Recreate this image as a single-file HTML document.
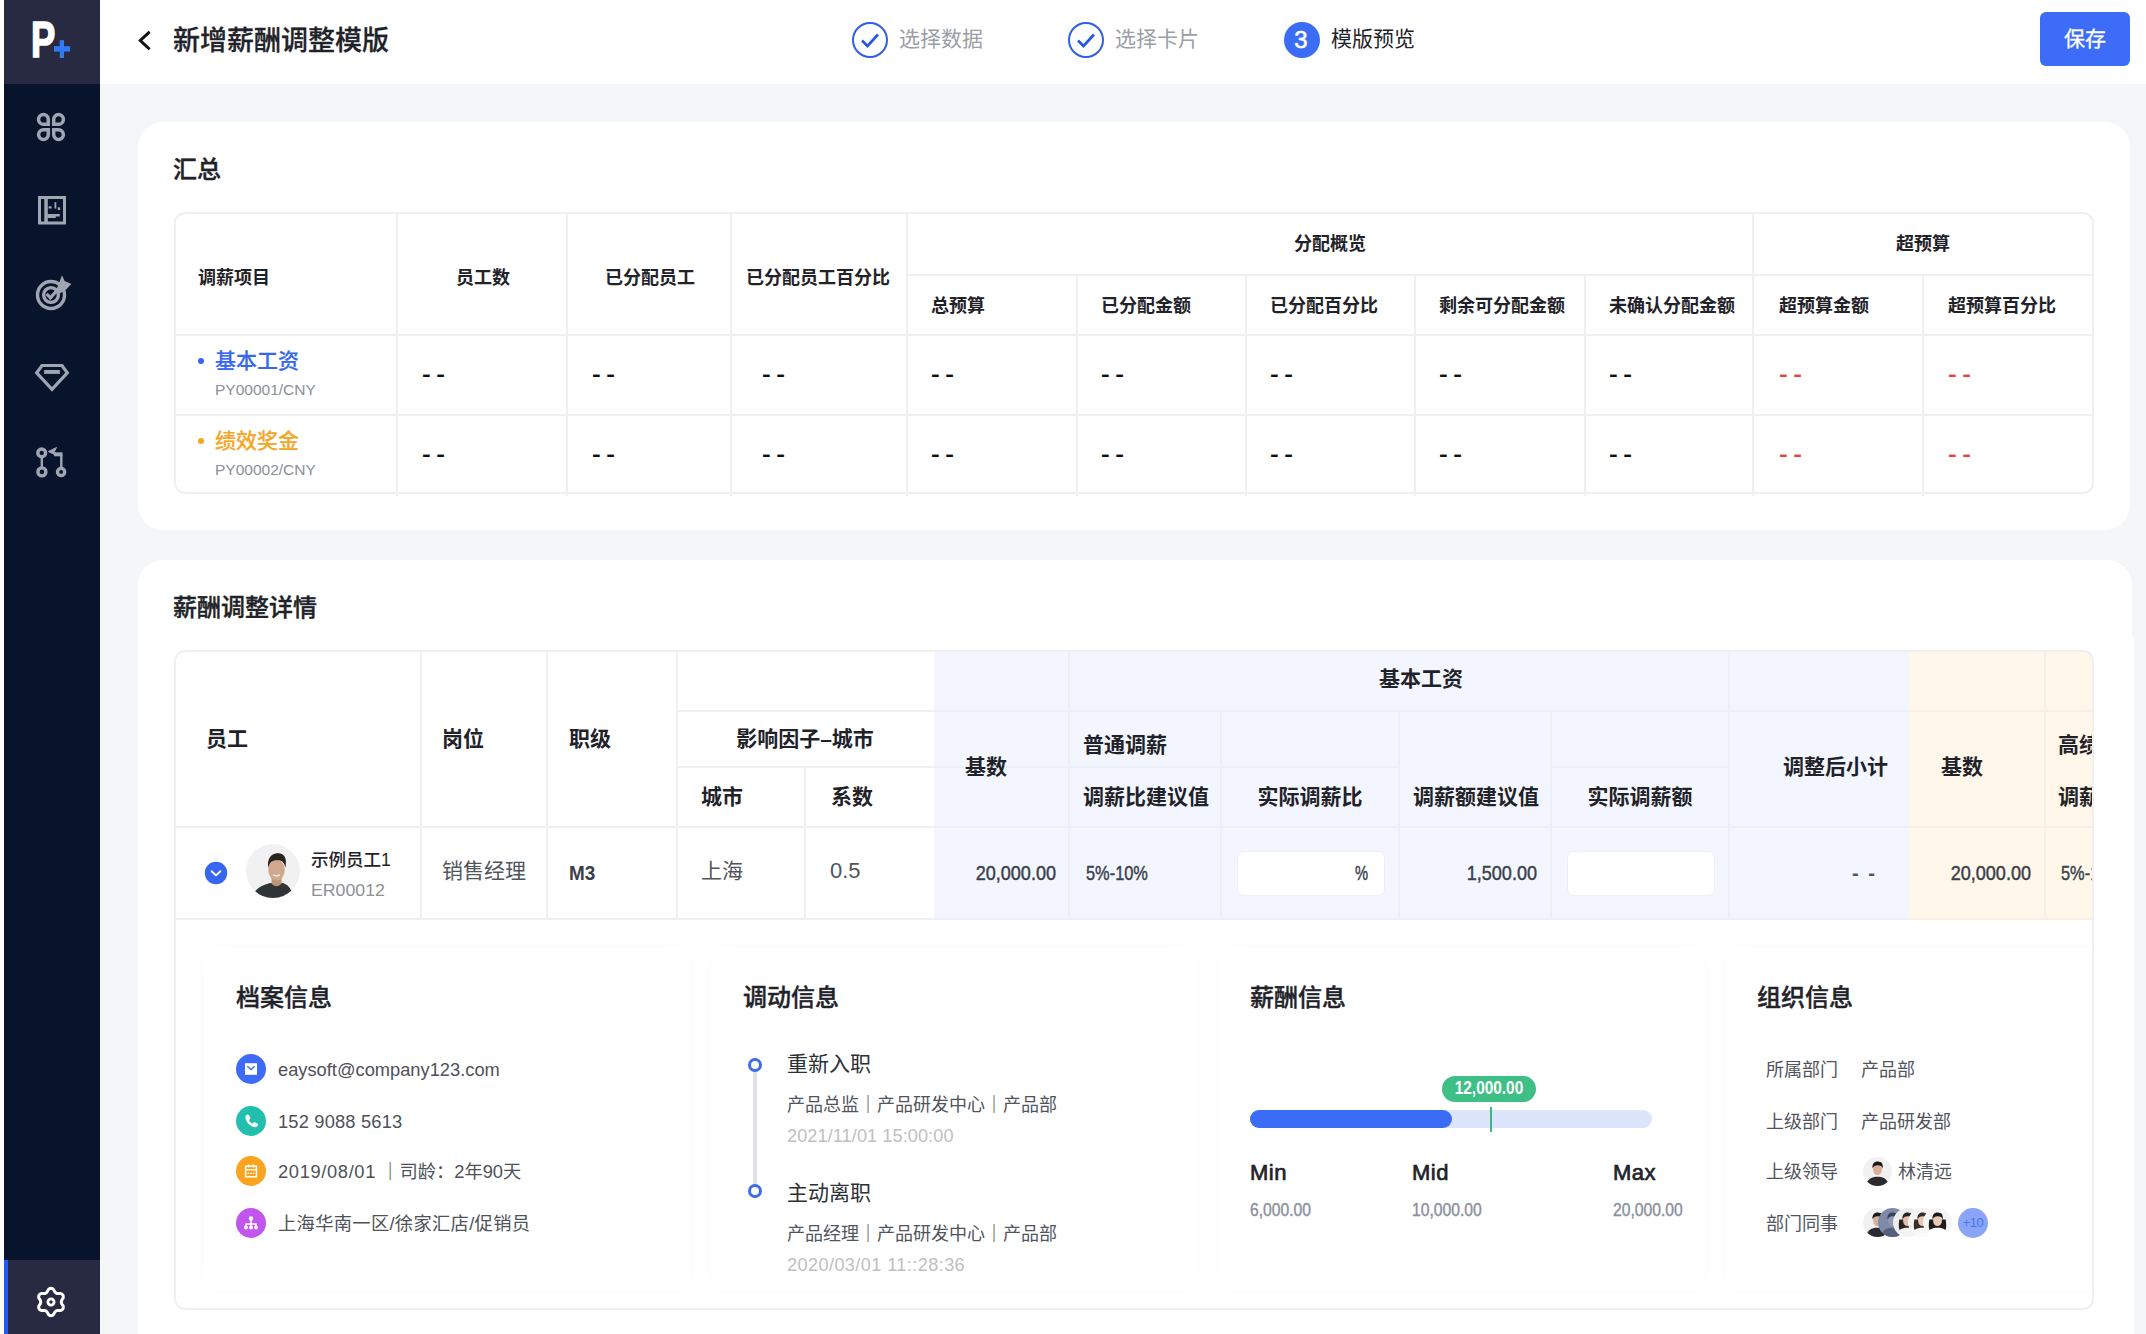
<!DOCTYPE html>
<html lang="zh-CN">
<head>
<meta charset="utf-8">
<title>新增薪酬调整模版</title>
<style>
*{box-sizing:border-box;margin:0;padding:0}
html,body{width:2146px;height:1334px;overflow:hidden;background:#f5f6f8}
body{font-family:"Liberation Sans","Noto Sans CJK SC",sans-serif;color:#1f2329;position:relative}
.abs{position:absolute}
.t{position:absolute;white-space:nowrap;line-height:1}
#side{position:absolute;left:4px;top:0;width:96px;height:1334px;background:#07142b}
#logo{position:absolute;left:0;top:0;width:96px;height:84px;background:#272a40}
#setbox{position:absolute;left:0;top:1260px;width:96px;height:74px;background:#272a40;border-left:4px solid #1f5bff}
#leftstrip{position:absolute;left:0;top:0;width:4px;height:1334px;background:#fff}
#hdr{position:absolute;left:100px;top:0;width:2046px;height:84px;background:#fff}
#save{position:absolute;left:2040px;top:12px;width:90px;height:54px;border-radius:6px;background:#3c6cf8;color:#fff;font-size:21px;line-height:54px;text-align:center;-webkit-text-stroke:.3px #fff}
.card{position:absolute;background:#fff;border-radius:25px}
.h1{font-size:24px;font-weight:500;color:#1f2329;-webkit-text-stroke:.4px #1f2329}
.tbl{position:absolute;border:2px solid #f0f0f1;border-radius:11px}
.vl{position:absolute;width:2px;background:#f0f0f0}
.hl{position:absolute;height:2px;background:#f0f0f0}
.th{font-size:18px;font-weight:700;color:#1f2329}
.th2{font-size:21px;font-weight:700;color:#1f2329}
.td{font-size:21px;color:#50545c}
.dash{font-size:20.5px;font-weight:700;color:#111;word-spacing:-1.3px;transform:scaleX(1.28);transform-origin:0 50%}
.num{font-size:21px;color:#3a3f4a;-webkit-text-stroke:.45px #3a3f4a}
</style>
</head>
<body>
<div id="leftstrip"></div>
<div id="side">
  <div id="logo"></div>
  <div class="t" style="left:26.8px;top:9.6px;width:40px;font-size:49.5px;line-height:60px;font-weight:700;color:#fff;-webkit-text-stroke:1.6px #fff;transform:scaleX(.735);transform-origin:0 0;">P</div>
  <svg class="abs" style="left:48px;top:38px" width="20" height="22" viewBox="0 0 20 22"><rect x="7.75" y="2.1" width="4.3" height="17.9" fill="#2f7bf6"/><rect x="2" y="8.2" width="16.1" height="5.4" fill="#2f7bf6"/></svg>
  <svg class="abs" style="left:31px;top:111px" width="32" height="32" viewBox="0 0 32 32" fill="none" stroke="#a0a5b2" stroke-width="3.5">
    <path d="M13.3 13.3 H8.45 A4.85 4.85 0 1 1 13.3 8.45 Z"/><path d="M18.7 13.3 V8.45 A4.85 4.85 0 1 1 23.55 13.3 Z"/><path d="M13.3 18.7 V23.55 A4.85 4.85 0 1 1 8.45 18.7 Z"/><path d="M18.7 18.7 H23.55 A4.85 4.85 0 1 1 18.7 23.55 Z"/>
  </svg>
  <svg class="abs" style="left:32px;top:194px" width="32" height="32" viewBox="0 0 32 32" fill="#a0a5b2" stroke="none">
    <path d="M2 2 H30 V30.4 H2 Z M5 5 V27.4 H27 V5 Z" fill-rule="evenodd"/><rect x="8.3" y="4" width="3.5" height="24"/><path d="M11.5 19.9 H23.8 V22.6 H19.8 V24 H11.5 Z"/><rect x="18.5" y="8.2" width="1.8" height="6.4"/><rect x="21.8" y="13.3" width="2.3" height="2.7"/><rect x="12.6" y="12.3" width="3" height="2.2"/>
  </svg>
  <svg class="abs" style="left:30px;top:272px" width="40" height="40" viewBox="0 0 40 40" fill="none" stroke="#a0a5b2" stroke-width="3.4">
    <circle cx="17" cy="23" r="13.5"/><circle cx="17" cy="23" r="7.4"/><path d="M12.6 21.8 L16.4 25.8 L26 15" stroke-width="3.2"/><path d="M22.2 18.4 L28 3.2 L30.6 9 L37.4 12.1 L31.1 18.4 L25.5 21.5 Z" fill="#a0a5b2" stroke="none"/>
  </svg>
  <svg class="abs" style="left:28px;top:360px" width="40" height="36" viewBox="0 0 40 36" fill="none" stroke="#a0a5b2" stroke-width="3.2" stroke-linejoin="miter">
    <path d="M10 5.5 H30 L35.3 12.8 L20 29.3 L4.7 12.8 Z"/><rect x="12.1" y="10" width="15.8" height="3.9" fill="#a0a5b2" stroke="none"/>
  </svg>
  <svg class="abs" style="left:28px;top:444px" width="40" height="40" viewBox="0 0 40 40" fill="none" stroke="#a0a5b2" stroke-width="3.4">
    <circle cx="9.7" cy="8.9" r="3.9"/><circle cx="9.9" cy="27.9" r="4"/><circle cx="29.1" cy="27.9" r="3.6"/><path d="M9.8 13v11M29.3 24V11" stroke-width="2.4"/><path d="M30.5 10.3 H22" stroke-width="4"/><path d="M24.5 3.5 L16.3 7.5 L24.5 11.5 L22.5 7.5 Z" fill="#a0a5b2" stroke-width="1"/>
  </svg>
  <div id="setbox"></div>
  <svg class="abs" style="left:29px;top:1284px" width="36" height="36" viewBox="0 0 36 36" fill="none" stroke="#fff" stroke-width="3" stroke-linejoin="round">
    <path d="M18.0 4.3 L18.9 4.4 L19.7 4.8 L20.5 5.4 L21.1 6.4 L21.6 7.5 L22.1 8.1 L22.6 8.7 L23.1 9.1 L23.8 9.4 L24.5 9.5 L25.3 9.6 L26.5 9.5 L27.7 9.5 L28.6 9.9 L29.3 10.4 L29.9 11.1 L30.2 12.0 L30.3 12.9 L30.2 13.9 L29.6 14.9 L28.9 15.8 L28.6 16.6 L28.4 17.3 L28.3 18.0 L28.4 18.7 L28.6 19.4 L28.9 20.2 L29.6 21.1 L30.2 22.1 L30.3 23.1 L30.2 24.0 L29.9 24.8 L29.3 25.6 L28.6 26.1 L27.7 26.5 L26.5 26.5 L25.3 26.4 L24.5 26.5 L23.8 26.6 L23.1 26.9 L22.6 27.3 L22.1 27.9 L21.6 28.5 L21.1 29.6 L20.5 30.6 L19.7 31.2 L18.9 31.6 L18.0 31.7 L17.1 31.6 L16.3 31.2 L15.5 30.6 L14.9 29.6 L14.4 28.5 L13.9 27.9 L13.4 27.3 L12.9 26.9 L12.2 26.6 L11.5 26.5 L10.7 26.4 L9.5 26.5 L8.3 26.5 L7.4 26.1 L6.7 25.6 L6.1 24.9 L5.8 24.0 L5.7 23.1 L5.8 22.1 L6.4 21.1 L7.1 20.2 L7.4 19.4 L7.6 18.7 L7.7 18.0 L7.6 17.3 L7.4 16.6 L7.1 15.8 L6.4 14.9 L5.8 13.9 L5.7 12.9 L5.8 12.0 L6.1 11.1 L6.7 10.4 L7.4 9.9 L8.3 9.5 L9.5 9.5 L10.7 9.6 L11.5 9.5 L12.2 9.4 L12.8 9.1 L13.4 8.7 L13.9 8.1 L14.4 7.5 L14.9 6.4 L15.5 5.4 L16.3 4.8 L17.1 4.4 Z"/>
    <circle cx="18" cy="18" r="3.1" stroke-width="2.8"/>
  </svg>
</div>
<div id="hdr"></div>
<svg class="abs" style="left:132px;top:26px" width="28" height="28" viewBox="0 0 28 28"><path d="M16.5 6.8 L8.3 14.5 L16.5 22.2" fill="none" stroke="#111" stroke-width="3" stroke-linecap="square" stroke-linejoin="miter"/></svg>
<div class="t" style="left:173px;top:23px;font-size:27px;line-height:36px;font-weight:500;color:#1f2329;-webkit-text-stroke:.3px #1f2329">新增薪酬调整模版</div>
<svg class="abs" style="left:850px;top:20px" width="40" height="40" viewBox="0 0 40 40"><circle cx="20" cy="20" r="17" fill="#fff" stroke="#2f5fe8" stroke-width="2"/><path d="M12 20.5 L17.5 26 L28 14.5" fill="none" stroke="#2455e6" stroke-width="2.6"/></svg>
<div class="t" style="left:899px;top:24px;font-size:21px;line-height:30px;color:#9a9ea6">选择数据</div>
<svg class="abs" style="left:1066px;top:20px" width="40" height="40" viewBox="0 0 40 40"><circle cx="20" cy="20" r="17" fill="#fff" stroke="#2f5fe8" stroke-width="2"/><path d="M12 20.5 L17.5 26 L28 14.5" fill="none" stroke="#2455e6" stroke-width="2.6"/></svg>
<div class="t" style="left:1115px;top:24px;font-size:21px;line-height:30px;color:#9a9ea6">选择卡片</div>
<div class="abs" style="left:1284px;top:22px;width:36px;height:36px;border-radius:50%;background:#3b6cf6;color:#fff;font-size:24px;line-height:35px;text-align:center;text-indent:-2px;-webkit-text-stroke:.6px #fff">3</div>
<div class="t" style="left:1331px;top:24px;font-size:21px;line-height:30px;color:#1f2329">模版预览</div>
<div id="save">保存</div>
<div class="card" style="left:138px;top:122px;width:1992px;height:408px"></div>
<div class="t h1" style="left:173px;top:154px;line-height:32px">汇总</div>
<div class="tbl" style="left:174px;top:212px;width:1920px;height:282px"></div>
<div class="vl" style="left:396px;top:214px;height:282px"></div>
<div class="vl" style="left:566px;top:214px;height:282px"></div>
<div class="vl" style="left:730px;top:214px;height:282px"></div>
<div class="vl" style="left:906px;top:214px;height:282px"></div>
<div class="vl" style="left:1076px;top:276px;height:220px"></div>
<div class="vl" style="left:1245px;top:276px;height:220px"></div>
<div class="vl" style="left:1414px;top:276px;height:220px"></div>
<div class="vl" style="left:1584px;top:276px;height:220px"></div>
<div class="vl" style="left:1752px;top:214px;height:282px"></div>
<div class="vl" style="left:1922px;top:276px;height:220px"></div>
<div class="hl" style="left:908px;top:274px;width:1184px"></div>
<div class="hl" style="left:176px;top:334px;width:1916px"></div>
<div class="hl" style="left:176px;top:414px;width:1916px"></div>
<div class="t th" style="left:198px;top:265px;line-height:26px">调薪项目</div>
<div class="t th" style="left:383px;width:200px;text-align:center;top:265px;line-height:26px">员工数</div>
<div class="t th" style="left:550px;width:200px;text-align:center;top:265px;line-height:26px">已分配员工</div>
<div class="t th" style="left:718px;width:200px;text-align:center;top:265px;line-height:26px">已分配员工百分比</div>
<div class="t th" style="left:1230px;width:200px;text-align:center;top:231px;line-height:26px">分配概览</div>
<div class="t th" style="left:1823px;width:200px;text-align:center;top:231px;line-height:26px">超预算</div>
<div class="t th" style="left:931px;top:293px;line-height:26px">总预算</div>
<div class="t th" style="left:1101px;top:293px;line-height:26px">已分配金额</div>
<div class="t th" style="left:1270px;top:293px;line-height:26px">已分配百分比</div>
<div class="t th" style="left:1439px;top:293px;line-height:26px">剩余可分配金额</div>
<div class="t th" style="left:1609px;top:293px;line-height:26px">未确认分配金额</div>
<div class="t th" style="left:1779px;top:293px;line-height:26px">超预算金额</div>
<div class="t th" style="left:1948px;top:293px;line-height:26px">超预算百分比</div>
<div class="abs" style="left:198px;top:358px;width:6px;height:6px;border-radius:50%;background:#3667ee"></div>
<div class="t" style="left:215px;top:346px;line-height:30px;font-size:21px;font-weight:500;color:#3667ee;-webkit-text-stroke:.2px #3667ee">基本工资</div>
<div class="t" style="left:215px;top:380px;line-height:20px;font-size:15.5px;color:#8a8f99">PY00001/CNY</div>
<div class="t dash" style="left:422px;top:359px;line-height:30px;color:#111">- -</div>
<div class="t dash" style="left:592px;top:359px;line-height:30px;color:#111">- -</div>
<div class="t dash" style="left:762px;top:359px;line-height:30px;color:#111">- -</div>
<div class="t dash" style="left:931px;top:359px;line-height:30px;color:#111">- -</div>
<div class="t dash" style="left:1101px;top:359px;line-height:30px;color:#111">- -</div>
<div class="t dash" style="left:1270px;top:359px;line-height:30px;color:#111">- -</div>
<div class="t dash" style="left:1439px;top:359px;line-height:30px;color:#111">- -</div>
<div class="t dash" style="left:1609px;top:359px;line-height:30px;color:#111">- -</div>
<div class="t dash" style="left:1779px;top:359px;line-height:30px;color:#e8453c">- -</div>
<div class="t dash" style="left:1948px;top:359px;line-height:30px;color:#e8453c">- -</div>
<div class="abs" style="left:198px;top:438px;width:6px;height:6px;border-radius:50%;background:#f5a623"></div>
<div class="t" style="left:215px;top:426px;line-height:30px;font-size:21px;font-weight:500;color:#f5a623;-webkit-text-stroke:.2px #f5a623">绩效奖金</div>
<div class="t" style="left:215px;top:460px;line-height:20px;font-size:15.5px;color:#8a8f99">PY00002/CNY</div>
<div class="t dash" style="left:422px;top:439px;line-height:30px;color:#111">- -</div>
<div class="t dash" style="left:592px;top:439px;line-height:30px;color:#111">- -</div>
<div class="t dash" style="left:762px;top:439px;line-height:30px;color:#111">- -</div>
<div class="t dash" style="left:931px;top:439px;line-height:30px;color:#111">- -</div>
<div class="t dash" style="left:1101px;top:439px;line-height:30px;color:#111">- -</div>
<div class="t dash" style="left:1270px;top:439px;line-height:30px;color:#111">- -</div>
<div class="t dash" style="left:1439px;top:439px;line-height:30px;color:#111">- -</div>
<div class="t dash" style="left:1609px;top:439px;line-height:30px;color:#111">- -</div>
<div class="t dash" style="left:1779px;top:439px;line-height:30px;color:#e8453c">- -</div>
<div class="t dash" style="left:1948px;top:439px;line-height:30px;color:#e8453c">- -</div>
<div class="card" style="left:138px;top:560px;width:1994px;height:820px"></div>
<div class="abs" style="left:2130px;top:637px;width:4px;height:700px;background:#fff"></div>
<div class="t h1" style="left:173px;top:592px;line-height:32px">薪酬调整详情</div>
<div id="t2" class="abs" style="left:174px;top:650px;width:1920px;height:660px;border-radius:11px;overflow:hidden">
<div class="abs" style="left:760px;top:0;width:975px;height:269px;background:#f3f6fe"></div>
<div class="abs" style="left:1735px;top:0;width:185px;height:269px;background:#fef7ea"></div>
<div class="vl" style="left:246px;top:1px;height:268px"></div>
<div class="vl" style="left:372px;top:1px;height:268px"></div>
<div class="vl" style="left:502px;top:1px;height:268px"></div>
<div class="vl" style="left:630px;top:117px;height:152px"></div>
<div class="hl" style="left:503px;top:60px;width:257px"></div>
<div class="hl" style="left:503px;top:116px;width:257px"></div>
<div class="hl" style="left:1px;top:176px;width:759px"></div>
<div class="hl" style="left:1px;top:268px;width:759px"></div>
<div class="vl" style="left:894px;top:1px;height:268px;background:#ebeff8"></div>
<div class="vl" style="left:1554px;top:1px;height:268px;background:#ebeff8"></div>
<div class="vl" style="left:1046px;top:61px;height:208px;background:#ebeff8"></div>
<div class="vl" style="left:1224px;top:61px;height:208px;background:#ebeff8"></div>
<div class="vl" style="left:1376px;top:61px;height:208px;background:#ebeff8"></div>
<div class="hl" style="left:760px;top:60px;width:975px;background:#ebeff8"></div>
<div class="hl" style="left:760px;top:116px;width:465px;background:#ebeff8"></div>
<div class="hl" style="left:1377px;top:116px;width:178px;background:#ebeff8"></div>
<div class="hl" style="left:760px;top:176px;width:975px;background:#ebeff8"></div>
<div class="hl" style="left:760px;top:268px;width:975px;background:#ebeff8"></div>
<div class="vl" style="left:1870px;top:1px;height:268px;background:#f5f0e6"></div>
<div class="hl" style="left:1735px;top:60px;width:185px;background:#f5f0e6"></div>
<div class="hl" style="left:1735px;top:176px;width:185px;background:#f5f0e6"></div>
<div class="hl" style="left:1735px;top:268px;width:185px;background:#f5f0e6"></div>
<div class="t th2" style="left:32px;top:74px;line-height:30px">员工</div>
<div class="t th2" style="left:268px;top:74px;line-height:30px">岗位</div>
<div class="t th2" style="left:395px;top:74px;line-height:30px">职级</div>
<div class="t th2" style="left:481px;width:300px;text-align:center;top:74px;line-height:30px">影响因子–城市</div>
<div class="t th2" style="left:527px;top:132px;line-height:30px">城市</div>
<div class="t th2" style="left:657px;top:132px;line-height:30px">系数</div>
<div class="t th2" style="left:791px;top:102px;line-height:30px">基数</div>
<div class="t th2" style="left:1097px;width:300px;text-align:center;top:14px;line-height:30px">基本工资</div>
<div class="t th2" style="left:909px;top:80px;line-height:30px">普通调薪</div>
<div class="t th2" style="left:909px;top:132px;line-height:30px">调薪比建议值</div>
<div class="t th2" style="left:986px;width:300px;text-align:center;top:132px;line-height:30px">实际调薪比</div>
<div class="t th2" style="left:1239px;top:132px;line-height:30px">调薪额建议值</div>
<div class="t th2" style="left:1316px;width:300px;text-align:center;top:132px;line-height:30px">实际调薪额</div>
<div class="t th2" style="left:1414px;width:300px;text-align:right;top:102px;line-height:30px">调整后小计</div>
<div class="t th2" style="left:1767px;top:102px;line-height:30px">基数</div>
<div class="t th2" style="left:1884px;top:80px;line-height:30px">高绩效调薪</div>
<div class="t th2" style="left:1884px;top:132px;line-height:30px">调薪比建议值</div>
<svg class="abs" style="left:30px;top:211px" width="24" height="24" viewBox="0 0 24 24"><circle cx="12" cy="12" r="11.2" fill="#3667f0"/><path d="M7.6 10.2 L12 14.4 L16.4 10.2" fill="none" stroke="#fff" stroke-width="1.9" stroke-linecap="round" stroke-linejoin="round"/></svg>
<svg class="abs" style="left:72px;top:194px" width="54" height="54" viewBox="0 0 54 54"><defs><clipPath id="av1"><circle cx="27" cy="27" r="27"/></clipPath></defs><g clip-path="url(#av1)"><rect width="54" height="54" fill="#f1f1f1"/><path d="M6 54 C8 45 16 41 24 39 L37 39 C43 41 46 46 47 54 Z" fill="#2f3437"/><path d="M25.500 33 h10 v6.500 c-3 3.500 -7 3.500 -10 0 z" fill="#bd9478"/><ellipse cx="30.500" cy="26" rx="8.200" ry="10.600" fill="#cfa88d"/><path d="M22.300 24 C20.500 13 27 8.300 33 9.300 C39.500 9.800 41 16 39.300 24 C38.500 18.500 36 16 31 16.300 C26 16.300 23.500 18.500 22.300 24 Z" fill="#2a2421"/><path d="M27 30.500 c2.300 1.800 5 1.800 7 0" stroke="#f3ebe6" stroke-width="1.300" fill="none"/></g></svg>
<div class="t" style="left:137px;top:196px;line-height:28px;font-size:17.5px;font-weight:500;color:#1f2329">示例员工1</div>
<div class="t" style="left:137px;top:228px;line-height:24px;font-size:17.2px;color:#8c9097;transform:scaleX(1.03);transform-origin:0 50%">ER00012</div>
<div class="t td" style="left:268px;top:206px;line-height:30px">销售经理</div>
<div class="t" style="left:395px;top:208px;line-height:30px;font-size:21px;font-weight:700;color:#3a3f4a;transform:scaleX(.9);transform-origin:0 50%">M3</div>
<div class="t td" style="left:527px;top:206px;line-height:30px">上海</div>
<div class="t" style="left:656px;top:206px;line-height:30px;font-size:22px;color:#50545c">0.5</div>
<div class="t num" style="left:682px;width:200px;text-align:right;top:208px;line-height:30px;transform:scaleX(0.86);transform-origin:100% 50%">20,000.00</div>
<div class="t num" style="left:912px;top:208px;line-height:30px;transform:scaleX(0.78);transform-origin:0 50%">5%-10%</div>
<div class="abs" style="left:1063px;top:201px;width:148px;height:45px;background:#fff;border-radius:7px;border:1px solid #eef0f6"></div>
<div class="t num" style="left:1181px;top:208px;line-height:30px;transform:scaleX(0.7);transform-origin:0 50%">%</div>
<div class="t num" style="left:1163px;width:200px;text-align:right;top:208px;line-height:30px;transform:scaleX(0.86);transform-origin:100% 50%">1,500.00</div>
<div class="abs" style="left:1393px;top:201px;width:148px;height:45px;background:#fff;border-radius:7px;border:1px solid #eef0f6"></div>
<div class="t" style="left:1603px;width:100px;text-align:right;top:208px;line-height:30px;font-size:20px;font-weight:700;color:#50545c;letter-spacing:2px">- -</div>
<div class="t num" style="left:1657px;width:200px;text-align:right;top:208px;line-height:30px;transform:scaleX(0.86);transform-origin:100% 50%">20,000.00</div>
<div class="t num" style="left:1887px;top:208px;line-height:30px;transform:scaleX(0.78);transform-origin:0 50%">5%-10%</div>
</div>
<div class="tbl" style="left:174px;top:650px;width:1920px;height:660px;pointer-events:none"></div>
<div class="abs" style="left:176px;top:921px;width:1916px;height:387px;overflow:hidden;border-radius:0 0 10px 10px">
<div class="abs" style="left:28px;top:27px;width:487px;height:342px;border-radius:14px;background:#fff;box-shadow:0 0 12px rgba(0,0,0,.02)"></div>
<div class="abs" style="left:535px;top:27px;width:487px;height:342px;border-radius:14px;background:#fff;box-shadow:0 0 12px rgba(0,0,0,.02)"></div>
<div class="abs" style="left:1042px;top:27px;width:487px;height:342px;border-radius:14px;background:#fff;box-shadow:0 0 12px rgba(0,0,0,.02)"></div>
<div class="abs" style="left:1549px;top:27px;width:487px;height:342px;border-radius:14px;background:#fff;box-shadow:0 0 12px rgba(0,0,0,.02)"></div>
</div>
<div class="t h1" style="left:236px;top:982px;line-height:32px">档案信息</div>
<div class="t h1" style="left:743px;top:982px;line-height:32px">调动信息</div>
<div class="t h1" style="left:1250px;top:982px;line-height:32px">薪酬信息</div>
<div class="t h1" style="left:1757px;top:982px;line-height:32px">组织信息</div>
<svg class="abs" style="left:236px;top:1054px" width="30" height="30" viewBox="0 0 30 30"><circle cx="15" cy="15" r="15" fill="#3d6bf7"/><path d="M9 9.2 h12 v11.6 h-12 z" fill="#fff"/><path d="M11.3 12.3 L15 15.5 L18.7 12.3" fill="none" stroke="#3d6bf7" stroke-width="1.4"/></svg>
<div class="t" style="left:278px;top:1056px;line-height:28px;font-size:18.3px;color:#4e5259">eaysoft@company123.com</div>
<svg class="abs" style="left:236px;top:1106px" width="30" height="30" viewBox="0 0 30 30"><circle cx="15" cy="15" r="15" fill="#22bfae"/><path d="M11 8.8 c.8 -.5 1.7 -.3 2.1 .5 l1.1 2.2 c.3 .7 .1 1.4 -.5 1.9 l-.8 .6 c.8 1.7 2 2.9 3.7 3.7 l.7 -.9 c.5 -.6 1.2 -.8 1.9 -.4 l2.1 1.1 c.8 .4 1 1.4 .5 2.1 c-.9 1.3 -2.3 1.8 -3.8 1.4 c-4.3 -1.1 -7.7 -4.600 -8.6 -8.9 c-.3 -1.4 .3 -2.6 1.6 -3.3 z" fill="#fff"/></svg>
<div class="t" style="left:278px;top:1108px;line-height:28px;font-size:18.3px;color:#4e5259"><span style="letter-spacing:.18px">152 9088 5613</span></div>
<svg class="abs" style="left:236px;top:1156px" width="30" height="30" viewBox="0 0 30 30"><circle cx="15" cy="15" r="15" fill="#faa31e"/><rect x="9.6" y="10.2" width="10.8" height="10.6" fill="none" stroke="#fff" stroke-width="1.5"/><path d="M9.6 13.8 h10.8" stroke="#fff" stroke-width="1.3"/><path d="M12.6 8.4 v3 M17.4 8.4 v3" stroke="#fff" stroke-width="1.5"/><path d="M11.6 17.4 h1.7 M14.15 17.4 h1.7 M16.7 17.4 h1.7" stroke="#fff" stroke-width="1.4"/></svg>
<div class="t" style="left:278px;top:1158px;line-height:28px;font-size:18.3px;color:#4e5259"><span style="letter-spacing:.65px">2019/08/01</span> <b>｜</b>司龄：2年90天</div>
<svg class="abs" style="left:236px;top:1208px" width="30" height="30" viewBox="0 0 30 30"><circle cx="15" cy="15" r="15" fill="#c355ef"/><circle cx="15" cy="10.5" r="2.3" fill="#fff"/><path d="M15 12 v4 M10 19 v-3 h10 v3" fill="none" stroke="#fff" stroke-width="1.5"/><circle cx="10" cy="19.5" r="2" fill="#fff"/><circle cx="15" cy="19.5" r="2" fill="#fff"/><circle cx="20" cy="19.5" r="2" fill="#fff"/><path d="M15 15v4" stroke="#fff" stroke-width="1.5"/></svg>
<div class="t" style="left:278px;top:1210px;line-height:28px;font-size:18.3px;color:#4e5259"><span style="letter-spacing:.3px">上海华南一区/徐家汇店/促销员</span></div>
<div class="abs" style="left:753px;top:1072px;width:3.6px;height:112px;background:#dfe1e6"></div>
<div class="abs" style="left:748px;top:1058px;width:14px;height:14px;border-radius:50%;border:3px solid #3d6bf2;background:#fff"></div>
<div class="abs" style="left:748px;top:1184px;width:14px;height:14px;border-radius:50%;border:3px solid #3d6bf2;background:#fff"></div>
<div class="t" style="left:787px;top:1049px;line-height:30px;font-size:21px;color:#2b2f36">重新入职</div><div class="t" style="left:787px;top:1091px;line-height:28px;font-size:18px;color:#50545c">产品总监<b>｜</b>产品研发中心<b>｜</b>产品部</div><div class="t" style="left:787px;top:1122px;line-height:28px;font-size:18.1px;color:#bdbfc3"><span style="letter-spacing:.1px">2021/11/01 15:00:00</span></div>
<div class="t" style="left:787px;top:1178px;line-height:30px;font-size:21px;color:#2b2f36">主动离职</div><div class="t" style="left:787px;top:1220px;line-height:28px;font-size:18px;color:#50545c">产品经理<b>｜</b>产品研发中心<b>｜</b>产品部</div><div class="t" style="left:787px;top:1251px;line-height:28px;font-size:18.1px;color:#bdbfc3"><span style="letter-spacing:.42px">2020/03/01 11::28:36</span></div>
<div class="abs" style="left:1250px;top:1110px;width:402px;height:18px;border-radius:9px;background:#dde5fc"></div>
<div class="abs" style="left:1250px;top:1110px;width:202px;height:18px;border-radius:9px;background:#3b6cf6"></div>
<div class="abs" style="left:1490px;top:1107px;width:2px;height:25px;background:#3bb97f"></div>
<div class="abs" style="left:1442px;top:1076px;width:94px;height:26px;border-radius:13px;background:#3dbf85"></div>
<div class="t" style="left:1389px;width:200px;text-align:center;top:1075px;line-height:26px;font-size:17.5px;font-weight:700;color:#fff;transform:scaleX(.88)">12,000.00</div>
<div class="t" style="left:1250px;top:1158px;line-height:30px;font-size:22px;font-weight:400;letter-spacing:.5px;color:#1f2329;-webkit-text-stroke:.7px #1f2329">Min</div>
<div class="t" style="left:1250px;top:1198px;line-height:24px;font-size:18px;color:#8a8f9c;-webkit-text-stroke:.4px #8a8f9c;transform:scaleX(.87);transform-origin:0 50%">6,000.00</div>
<div class="t" style="left:1412px;top:1158px;line-height:30px;font-size:22px;font-weight:400;letter-spacing:.5px;color:#1f2329;-webkit-text-stroke:.7px #1f2329">Mid</div>
<div class="t" style="left:1412px;top:1198px;line-height:24px;font-size:18px;color:#8a8f9c;-webkit-text-stroke:.4px #8a8f9c;transform:scaleX(.87);transform-origin:0 50%">10,000.00</div>
<div class="t" style="left:1613px;top:1158px;line-height:30px;font-size:22px;font-weight:400;letter-spacing:.5px;color:#1f2329;-webkit-text-stroke:.7px #1f2329">Max</div>
<div class="t" style="left:1613px;top:1198px;line-height:24px;font-size:18px;color:#8a8f9c;-webkit-text-stroke:.4px #8a8f9c;transform:scaleX(.87);transform-origin:0 50%">20,000.00</div>
<div class="t" style="left:1766px;top:1056px;line-height:28px;font-size:18px;color:#50545c">所属部门</div>
<div class="t" style="left:1861px;top:1056px;line-height:28px;font-size:18px;color:#50545c">产品部</div>
<div class="t" style="left:1766px;top:1108px;line-height:28px;font-size:18px;color:#50545c">上级部门</div>
<div class="t" style="left:1861px;top:1108px;line-height:28px;font-size:18px;color:#50545c">产品研发部</div>
<div class="t" style="left:1766px;top:1158px;line-height:28px;font-size:18px;color:#50545c">上级领导</div>
<div class="t" style="left:1766px;top:1210px;line-height:28px;font-size:18px;color:#50545c">部门同事</div>
<div class="t" style="left:1898px;top:1158px;line-height:28px;font-size:18px;color:#50545c">林清远</div>
<svg class="abs" style="left:1862.5px;top:1156.5px" width="29" height="29" viewBox="0 0 30 30"><defs><clipPath id="avL"><circle cx="15" cy="15" r="15"/></clipPath></defs><g clip-path="url(#avL)"><rect width="30" height="30" fill="#f1f1f1"/><path d="M3 30 C4 23 9 21 13 20.5 L17 20.5 C21 21 26 23 27 30 Z" fill="#2b2b2d"/><ellipse cx="15" cy="13" rx="4.6" ry="5.6" fill="#d9b096"/><path d="M10 12 C9 6 13 4 16.5 5 C20 5 21 8.5 20.2 12 C19.5 9.5 18 8.5 15 8.6 C12.5 8.6 11 9.5 10 12 Z" fill="#1c1a1a"/></g></svg>
<svg class="abs" style="left:1862.5px;top:1207.5px" width="29" height="29" viewBox="0 0 30 30"><defs><clipPath id="avc0"><circle cx="15" cy="15" r="15"/></clipPath></defs><g clip-path="url(#avc0)"><rect width="30" height="30" fill="#f1f1f1"/><path d="M3 30 C4 23 9 21 13 20.5 L17 20.5 C21 21 26 23 27 30 Z" fill="#2b2b2d"/><ellipse cx="15" cy="13" rx="4.6" ry="5.6" fill="#d9b096"/><path d="M10 12 C9 6 13 4 16.5 5 C20 5 21 8.5 20.2 12 C19.5 9.5 18 8.5 15 8.6 C12.5 8.6 11 9.5 10 12 Z" fill="#1c1a1a"/></g></svg>
<svg class="abs" style="left:1877.5px;top:1207.5px" width="29" height="29" viewBox="0 0 30 30"><defs><clipPath id="avc1"><circle cx="15" cy="15" r="15"/></clipPath></defs><g clip-path="url(#avc1)"><rect width="30" height="30" fill="#7f8aa8"/><path d="M3 30 C4 23 9 21 13 20.5 L17 20.5 C21 21 26 23 27 30 Z" fill="#55607f"/><ellipse cx="15" cy="13" rx="4.6" ry="5.6" fill="#8f9bb5"/><path d="M10 12 C9 6 13 4 16.5 5 C20 5 21 8.5 20.2 12 C19.5 9.5 18 8.5 15 8.6 C12.5 8.6 11 9.5 10 12 Z" fill="#3a3f5a"/></g></svg>
<svg class="abs" style="left:1892.5px;top:1207.5px" width="29" height="29" viewBox="0 0 30 30"><defs><clipPath id="avc2"><circle cx="15" cy="15" r="15"/></clipPath></defs><g clip-path="url(#avc2)"><rect width="30" height="30" fill="#ececec"/><path d="M6.5 12 C5 22 7 24 9 25 L21 25 C23 24 25 22 23.5 12 Z" fill="#2a2323"/><path d="M3 30 C4 23 9 21 13 20.5 L17 20.5 C21 21 26 23 27 30 Z" fill="#f4f4f4"/><ellipse cx="15" cy="13" rx="4.6" ry="5.6" fill="#e3c0a8"/><path d="M10 12 C9 6 13 4 16.5 5 C20 5 21 8.5 20.2 12 C19.5 9.5 18 8.5 15 8.6 C12.5 8.6 11 9.5 10 12 Z" fill="#2a2323"/></g></svg>
<svg class="abs" style="left:1907.5px;top:1207.5px" width="29" height="29" viewBox="0 0 30 30"><defs><clipPath id="avc3"><circle cx="15" cy="15" r="15"/></clipPath></defs><g clip-path="url(#avc3)"><rect width="30" height="30" fill="#f3f3f3"/><path d="M6.5 12 C5 22 7 24 9 25 L21 25 C23 24 25 22 23.5 12 Z" fill="#3a2d28"/><path d="M3 30 C4 23 9 21 13 20.5 L17 20.5 C21 21 26 23 27 30 Z" fill="#fafafa"/><ellipse cx="15" cy="13" rx="4.6" ry="5.6" fill="#e6c6b0"/><path d="M10 12 C9 6 13 4 16.5 5 C20 5 21 8.5 20.2 12 C19.5 9.5 18 8.5 15 8.6 C12.5 8.6 11 9.5 10 12 Z" fill="#3a2d28"/></g></svg>
<svg class="abs" style="left:1922.5px;top:1207.5px" width="29" height="29" viewBox="0 0 30 30"><defs><clipPath id="avc4"><circle cx="15" cy="15" r="15"/></clipPath></defs><g clip-path="url(#avc4)"><rect width="30" height="30" fill="#f5f5f5"/><path d="M6.5 12 C5 22 7 24 9 25 L21 25 C23 24 25 22 23.5 12 Z" fill="#1f1b1b"/><path d="M3 30 C4 23 9 21 13 20.5 L17 20.5 C21 21 26 23 27 30 Z" fill="#ffffff"/><ellipse cx="15" cy="13" rx="4.6" ry="5.6" fill="#e8c9b5"/><path d="M10 12 C9 6 13 4 16.5 5 C20 5 21 8.5 20.2 12 C19.5 9.5 18 8.5 15 8.6 C12.5 8.6 11 9.5 10 12 Z" fill="#1f1b1b"/></g></svg>
<div class="abs" style="left:1958px;top:1208px;width:30px;height:30px;border-radius:50%;background:#8aa4f8;color:#4a73f0;font-size:13px;line-height:30px;text-align:center;letter-spacing:-.5px">+10</div>
</body>
</html>
